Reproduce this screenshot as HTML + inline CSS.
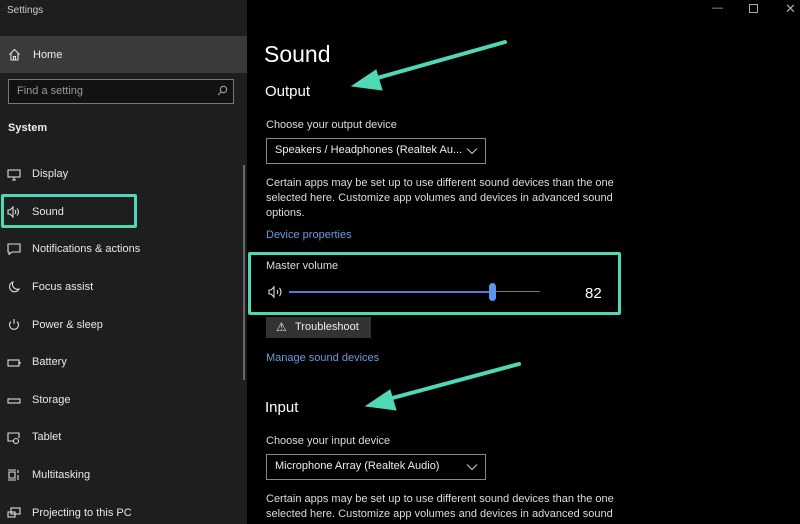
<!DOCTYPE html>
<html style="width:800px;height:524px;overflow:hidden"><head><style>
*{margin:0;padding:0;box-sizing:border-box}
body{width:800px;height:524px;overflow:hidden;background:#000;font-family:"Liberation Sans",sans-serif;color:#fff;position:relative}
.sb{position:absolute;left:0;top:0;width:247px;height:524px;background:#1e1e1e}
.a{position:absolute;white-space:nowrap}
.it{position:absolute;left:32px;font-size:11px;color:#e8e8e8}
.ic{position:absolute;left:7px;width:14px;height:12px}
.p{font-size:11px;color:#ddd}
.lk{color:#6b9be0;font-size:11px}
</style></head><body>
<div class="sb"></div>
<div class="a" style="left:7px;top:5px;font-size:10px;color:#ccc">Settings</div>
<div class="a" style="left:0;top:36px;width:247px;height:37px;background:#3a3a3a"></div>
<svg class="a" style="left:8px;top:48px" width="13" height="13" viewBox="0 0 13 13" fill="none" stroke="#ddd" stroke-width="1.1"><path d="M1.5 6.5L6.5 1.5L11.5 6.5M3 5v7h7V5M5.5 12V8.5h2V12"/></svg>
<div class="a" style="left:33px;top:49px;font-size:11px;color:#eee">Home</div>
<div class="a" style="left:8px;top:79px;width:226px;height:25px;border:1px solid #777;background:#121212"></div>
<div class="a" style="left:17px;top:85px;font-size:11px;color:#999">Find a setting</div>
<svg class="a" style="left:217px;top:85px" width="11" height="11" viewBox="0 0 11 11" fill="none" stroke="#aaa" stroke-width="1"><circle cx="6.5" cy="4.5" r="3.2"/><path d="M4.2 6.8L1 10"/></svg>
<div class="a" style="left:8px;top:122px;font-size:11px;font-weight:bold;color:#eee">System</div>
<div class="a" style="left:243px;top:165px;width:2px;height:215px;background:#666"></div>

<svg class="ic" style="top:169px" viewBox="0 0 14 12" fill="none" stroke="#ddd" stroke-width="1.1"><rect x="1" y="1" width="12" height="7"/><path d="M5 11h4M7 8v3"/></svg>
<div class="it" style="top:168px">Display</div>
<div class="a" style="left:1px;top:194px;width:136px;height:34px;border:3px solid #4fd8b6;border-radius:2px"></div>
<svg class="ic" style="top:206px" viewBox="0 0 14 12" fill="none" stroke="#ddd" stroke-width="1.1"><path d="M1 4h2l3-3v10L3 8H1z"/><path d="M8 4q1.5 2 0 4M10 2.5q3 3.5 0 7"/></svg>
<div class="it" style="top:206px">Sound</div>
<svg class="ic" style="top:243px" viewBox="0 0 14 12" fill="none" stroke="#ddd" stroke-width="1.1"><path d="M1 1h12v8H5l-3 2.5V9H1z"/></svg>
<div class="it" style="top:243px">Notifications &amp; actions</div>
<svg class="ic" style="top:281px" viewBox="0 0 14 12" fill="none" stroke="#ddd" stroke-width="1.1"><path d="M6 1a5 5 0 1 0 6 7A5 5 0 0 1 6 1z"/></svg>
<div class="it" style="top:281px">Focus assist</div>
<svg class="ic" style="top:319px" viewBox="0 0 14 12" fill="none" stroke="#ddd" stroke-width="1.1"><path d="M7 0v5M4 2.5a4.5 4.5 0 1 0 6 0"/></svg>
<div class="it" style="top:319px">Power &amp; sleep</div>
<svg class="ic" style="top:357px" viewBox="0 0 14 12" fill="none" stroke="#ddd" stroke-width="1.1"><rect x="1" y="3" width="11" height="6"/><path d="M13 5v2"/></svg>
<div class="it" style="top:356px">Battery</div>
<svg class="ic" style="top:395px" viewBox="0 0 14 12" fill="none" stroke="#ddd" stroke-width="1.1"><rect x="1" y="4" width="12" height="4"/></svg>
<div class="it" style="top:394px">Storage</div>
<svg class="ic" style="top:432px" viewBox="0 0 14 12" fill="none" stroke="#ddd" stroke-width="1.1"><path d="M6 9H1V1h11v5"/><circle cx="9" cy="9" r="2.5"/></svg>
<div class="it" style="top:431px">Tablet</div>
<svg class="ic" style="top:469px" viewBox="0 0 14 12" fill="none" stroke="#ddd" stroke-width="1.1"><path d="M1 1h8M1 11h8M2 3h6v6H2zM11 1v3M11 6v5"/></svg>
<div class="it" style="top:469px">Multitasking</div>
<svg class="ic" style="top:507px" viewBox="0 0 14 12" fill="none" stroke="#ddd" stroke-width="1.1"><rect x="4" y="1" width="9" height="6"/><rect x="1" y="5" width="7" height="5"/></svg>
<div class="it" style="top:507px">Projecting to this PC</div>

<div class="a" style="left:712px;top:2px;font-size:11px;color:#aaa">—</div>
<div class="a" style="left:749px;top:4px;width:9px;height:9px;border:1px solid #aaa"></div>
<div class="a" style="left:785px;top:1px;font-size:13px;color:#aaa">✕</div>

<div class="a" style="left:264px;top:41px;font-size:23px;color:#fff">Sound</div>
<div class="a" style="left:265px;top:83px;font-size:15px;color:#fff">Output</div>
<div class="a p" style="left:266px;top:119px">Choose your output device</div>
<div class="a" style="left:266px;top:138px;width:220px;height:26px;border:1px solid #888"></div>
<div class="a" style="left:275px;top:144px;font-size:11px;color:#eee">Speakers / Headphones (Realtek Au...</div>
<svg class="a" style="left:466px;top:147px" width="12" height="8" viewBox="0 0 12 8" fill="none" stroke="#ccc"><path d="M1 1.5l5 5 5-5"/></svg>
<div class="a p" style="left:266px;top:176px;line-height:15px;white-space:normal;width:360px">Certain apps may be set up to use different sound devices than the one selected here. Customize app volumes and devices in advanced sound options.</div>
<div class="a lk" style="left:266px;top:229px">Device properties</div>

<div class="a" style="left:248px;top:252px;width:373px;height:63px;border:3px solid #4fd8b6;border-radius:2px"></div>
<div class="a p" style="left:266px;top:260px">Master volume</div>
<svg class="a" style="left:268px;top:285px" width="18" height="14" viewBox="0 0 18 14" fill="none" stroke="#ddd" stroke-width="1.1"><path d="M1 5h2l3-3v10L3 9H1z"/><path d="M9 5q1.5 2 0 4M11.5 3q3 4 0 8"/></svg>
<div class="a" style="left:289px;top:291px;width:203px;height:2px;background:#4b7fd6"></div>
<div class="a" style="left:492px;top:291px;width:48px;height:1px;background:#777"></div>
<div class="a" style="left:489px;top:283px;width:7px;height:18px;border-radius:4px;background:#5a96ea"></div>
<div class="a" style="left:585px;top:285px;font-size:15px;color:#fff">82</div>
<div class="a" style="left:266px;top:317px;width:105px;height:21px;background:#333"></div>
<div class="a" style="left:276px;top:320px;font-size:12px;color:#eee">⚠</div>
<div class="a" style="left:295px;top:321px;font-size:11px;color:#eee">Troubleshoot</div>
<div class="a lk" style="left:266px;top:352px">Manage sound devices</div>

<div class="a" style="left:265px;top:399px;font-size:15px;color:#fff">Input</div>
<div class="a p" style="left:266px;top:435px">Choose your input device</div>
<div class="a" style="left:266px;top:454px;width:220px;height:26px;border:1px solid #888"></div>
<div class="a" style="left:275px;top:460px;font-size:11px;color:#eee">Microphone Array (Realtek Audio)</div>
<svg class="a" style="left:466px;top:463px" width="12" height="8" viewBox="0 0 12 8" fill="none" stroke="#ccc"><path d="M1 1.5l5 5 5-5"/></svg>
<div class="a p" style="left:266px;top:492px;line-height:15px;white-space:normal;width:360px;height:32px;overflow:hidden">Certain apps may be set up to use different sound devices than the one selected here. Customize app volumes and devices in advanced sound options.</div>

<svg class="a" style="left:0;top:0" width="800" height="524">
<g stroke="#4fd8b6" stroke-width="4" stroke-linecap="round" fill="#4fd8b6">
<path d="M505 42L370 80"/><path d="M352 86L376 70L382 90Z" stroke-width="1"/>
<path d="M519 364L385 400"/><path d="M366 406L390 390L396 410Z" stroke-width="1"/>
</g></svg>
</body></html>
